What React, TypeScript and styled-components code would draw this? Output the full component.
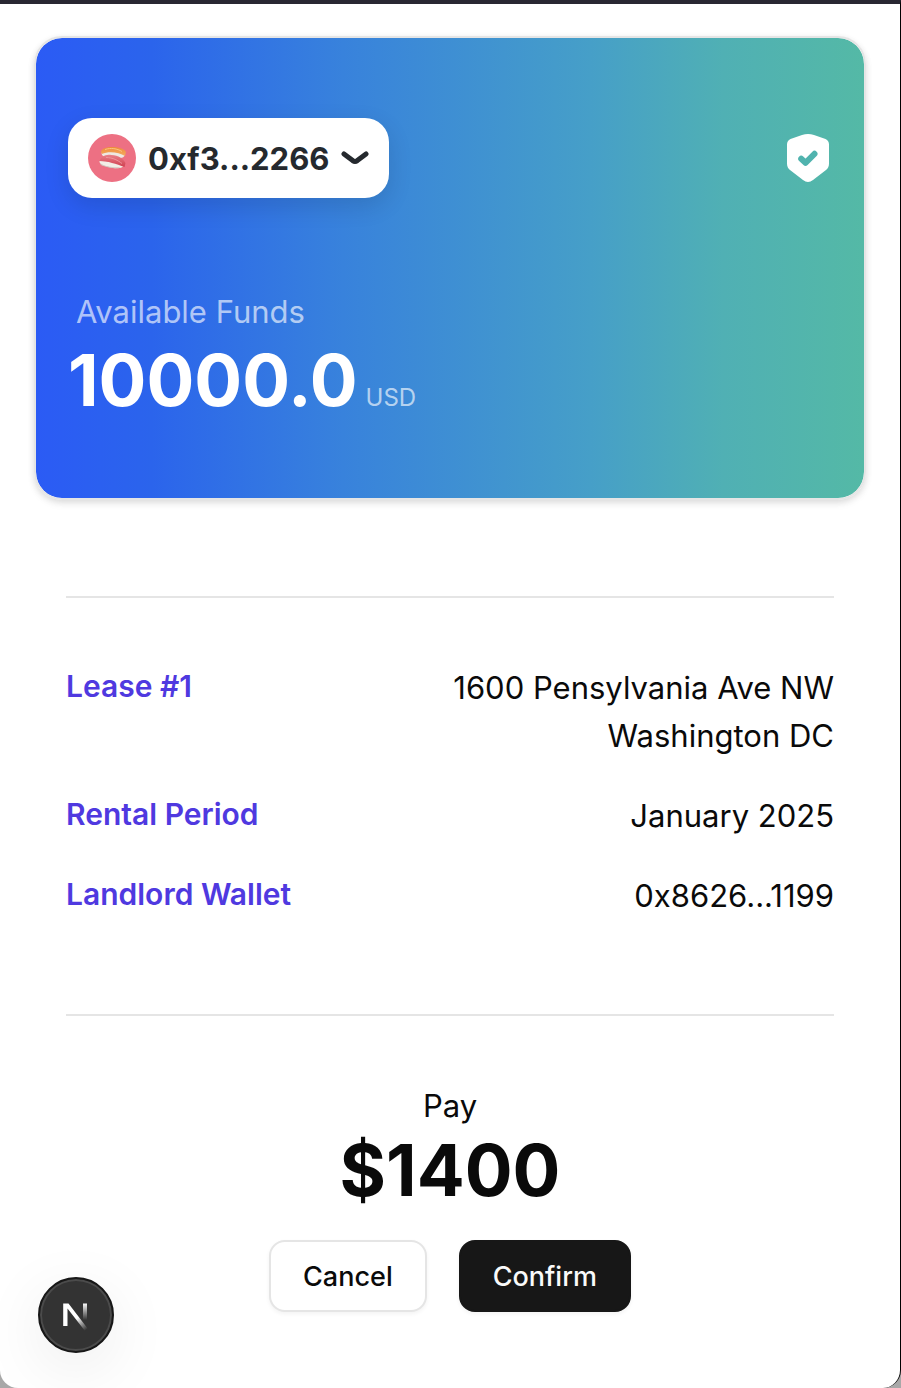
import React from "react";
import styled, { createGlobalStyle } from "styled-components";

const GlobalStyle = createGlobalStyle`
  * { box-sizing: border-box; }
  body {
    margin: 0;
    background: #a8a8a8;
    color: #0a0a0a;
    font-family: Inter, "Liberation Sans", sans-serif;
    font-size: 31px;
    line-height: 48px;
  }
  h1, h2, p, dl, dt, dd { margin: 0; }
  button { font-family: inherit; cursor: pointer; }
`;

const Frame = styled.div`
  min-height: 100vh;
  background: #fff;
  border-top: 4px solid #292732;
  border-right: 1px solid #000;
  border-bottom-left-radius: 18px;
  border-bottom-right-radius: 18px;
`;

const Page = styled.main`
  padding: 32px 34px;
`;

const BalanceCard = styled.section`
  display: flex;
  flex-direction: column;
  gap: 90px;
  padding: 80px 32px 56px;
  border: 2px solid #e5e5e5;
  border-radius: 28px;
  background: linear-gradient(90deg, #2b5bf5 0%, #2b64ec 14%, #3882dc 37%, #469fc8 67%, #50b0b4 83%, #54b9a6 100%) padding-box;
  box-shadow: 0 2px 6px rgba(0, 0, 0, 0.1), 0 4px 8px rgba(0, 0, 0, 0.06);
`;

const CardHeader = styled.header`
  display: flex;
  align-items: center;
  justify-content: space-between;
`;

const WalletButton = styled.button`
  display: flex;
  align-items: center;
  gap: 12px;
  height: 80px;
  padding: 0 20px;
  border: 0;
  border-radius: 24px;
  background: #fff;
  color: #25292e;
  font-size: 31px;
  font-weight: 700;
  box-shadow: 0 8px 24px rgba(0, 0, 0, 0.12);
`;

const Funds = styled.div`
  color: #fff;
`;

const FundsLabel = styled.p`
  padding-left: 8px;
  color: rgba(255, 255, 255, 0.64);
`;

const FundsRow = styled.p`
  display: flex;
  align-items: baseline;
  gap: 8px;
  line-height: 88px;
`;

const Amount = styled.strong`
  font-size: 71px;
  font-weight: 700;
`;

const Currency = styled.span`
  color: rgba(255, 255, 255, 0.64);
  font-size: 24px;
`;

const Details = styled.section`
  margin: 96px 32px 0;
  padding: 66px 0 94px;
  border-top: 2px solid #e5e5e5;
  border-bottom: 2px solid #e5e5e5;
`;

const DetailList = styled.dl`
  display: grid;
  gap: 32px;
`;

const DetailRow = styled.div`
  display: flex;
  justify-content: space-between;
`;

const DetailLabel = styled.dt`
  color: #4f39e0;
  font-size: 30px;
  font-weight: 600;
  line-height: 44px;
`;

const DetailValue = styled.dd`
  text-align: right;
`;

const Payment = styled.section`
  padding-top: 66px;
  text-align: center;
`;

const Total = styled.h1`
  font-size: 71px;
  font-weight: 700;
  line-height: 80px;
`;

const Actions = styled.div`
  display: flex;
  justify-content: center;
  gap: 32px;
  padding-top: 30px;
`;

const ActionButton = styled.button<{ $primary?: boolean }>`
  height: 72px;
  padding: 0 32px;
  border: 2px solid ${(p) => (p.$primary ? "#171717" : "#e5e5e5")};
  border-radius: 16px;
  background: ${(p) => (p.$primary ? "#171717" : "#fff")};
  color: ${(p) => (p.$primary ? "#fafafa" : "#0a0a0a")};
  font-size: 27px;
  font-weight: 500;
  box-shadow: 0 2px 4px rgba(0, 0, 0, 0.05);
`;

const DevBadge = styled.button`
  position: fixed;
  left: 38px;
  bottom: 35px;
  display: grid;
  place-items: center;
  width: 76px;
  height: 76px;
  padding: 0;
  border: 2px solid #171717;
  border-radius: 50%;
  background: #333;
  box-shadow: inset 0 0 0 2px #4b4b4b, 0 16px 64px rgba(0, 0, 0, 0.08);
`;

const SushiAvatar = () => (
  <svg width="48" height="48" viewBox="0 0 48 48" aria-hidden="true">
    <defs>
      <linearGradient id="salmon" x1="0" y1="0" x2="0" y2="1">
        <stop offset="0" stopColor="#ee8c3a" />
        <stop offset="1" stopColor="#f4ab62" />
      </linearGradient>
      <linearGradient id="tuna" x1="0" y1="0" x2="0" y2="1">
        <stop offset="0" stopColor="#ea8189" />
        <stop offset="1" stopColor="#cf3f50" />
      </linearGradient>
    </defs>
    <circle cx="24" cy="24" r="24" fill="#ed7083" />
    <path d="M14 18c6-2 17-2 23 1 0 4-2 5-6 5l-14-1c-3-1-4-3-3-5z" fill="#eee9e2" />
    <path d="M13 18c1-7 22-6 25 0l-1 4c-6-4-17-5-23-2z" fill="url(#salmon)" />
    <path d="M17 15.500c6-2 12-1 17 2" fill="none" stroke="#fbc27e" strokeWidth="1" />
    <path d="M11.500 27c8 0 20 2 24.500 4-1 4-9 4-15 2-6-1-10-3-9.500-6z" fill="#f2eee7" />
    <path d="M12 29c5 4 15 5 22 4-5 2-11 1-15 0-4-1-7-2-7-4z" fill="#cfc9c1" />
    <path d="M11.500 27c2-5 6-7 12-6 7 0 12 4 14 8l-1 4c-8-3-17-6-25-6z" fill="url(#tuna)" />
    <path d="M18 23.500c7 0 12 3 16 6" fill="none" stroke="#ee959b" strokeWidth="1" />
  </svg>
);

const Chevron = () => (
  <svg width="28" height="14" viewBox="0 0 28 14" aria-hidden="true">
    <path d="M3 3l8.700 6.600q2.300 1.600 4.600 0L25 3" fill="none" stroke="currentColor" strokeWidth="5" strokeLinecap="round" strokeLinejoin="round" />
  </svg>
);

const ShieldCheck = () => (
  <svg width="48" height="48" viewBox="0 0 48 48" role="img" aria-label="Verified">
    <path d="M24 0q3 0 6 1l11.500 4q3.500 1.500 3.500 5.500v19q0 4-3 6.500L29 46q-5 4-10 0L6 36q-3-2.500-3-6.500v-19q0-4 3.500-5.500L18 1q3-1 6-1z" fill="#fff" />
    <path d="M17.200 24.800l4.300 4 9-9" fill="none" stroke="#50b3ae" strokeWidth="6" strokeLinecap="round" strokeLinejoin="round" />
  </svg>
);

const NextMark = () => (
  <svg width="28" height="32" viewBox="0 0 28 32" aria-hidden="true">
    <defs>
      <linearGradient id="diagonal" gradientUnits="userSpaceOnUse" x1="15" y1="19" x2="24" y2="31">
        <stop stopColor="#fff" />
        <stop offset="1" stopColor="#fff" stopOpacity="0" />
      </linearGradient>
      <linearGradient id="stem" gradientUnits="userSpaceOnUse" x1="0" y1="4" x2="0" y2="21">
        <stop stopColor="#fff" />
        <stop offset="1" stopColor="#fff" stopOpacity="0" />
      </linearGradient>
    </defs>
    <path d="M1.200 27V4.500h5.300L26 30l-3 2L5.500 9.500V27z" fill="url(#diagonal)" />
    <path d="M21 4.500h4v17h-4z" fill="url(#stem)" />
  </svg>
);

const leaseDetails = [
  { label: "Lease #1", lines: ["1600 Pensylvania Ave NW", "Washington DC"] },
  { label: "Rental Period", lines: ["January 2025"] },
  { label: "Landlord Wallet", lines: ["0x8626...1199"] },
];

export default function App() {
  return (
    <Frame>
      <GlobalStyle />
      <Page>
        <BalanceCard>
          <CardHeader>
            <WalletButton type="button">
              <SushiAvatar />
              <span>0xf3...2266</span>
              <Chevron />
            </WalletButton>
            <ShieldCheck />
          </CardHeader>
          <Funds>
            <FundsLabel>Available Funds</FundsLabel>
            <FundsRow>
              <Amount>10000.0</Amount>
              <Currency>USD</Currency>
            </FundsRow>
          </Funds>
        </BalanceCard>
        <Details>
          <DetailList>
            {leaseDetails.map(({ label, lines }) => (
              <DetailRow key={label}>
                <DetailLabel>{label}</DetailLabel>
                <DetailValue>
                  {lines.map((line) => (
                    <p key={line}>{line}</p>
                  ))}
                </DetailValue>
              </DetailRow>
            ))}
          </DetailList>
        </Details>
        <Payment>
          <p>Pay</p>
          <Total>$1400</Total>
          <Actions>
            <ActionButton type="button">Cancel</ActionButton>
            <ActionButton type="button" $primary>Confirm</ActionButton>
          </Actions>
        </Payment>
      </Page>
      <DevBadge type="button" aria-label="Open developer tools">
        <NextMark />
      </DevBadge>
    </Frame>
  );
}
